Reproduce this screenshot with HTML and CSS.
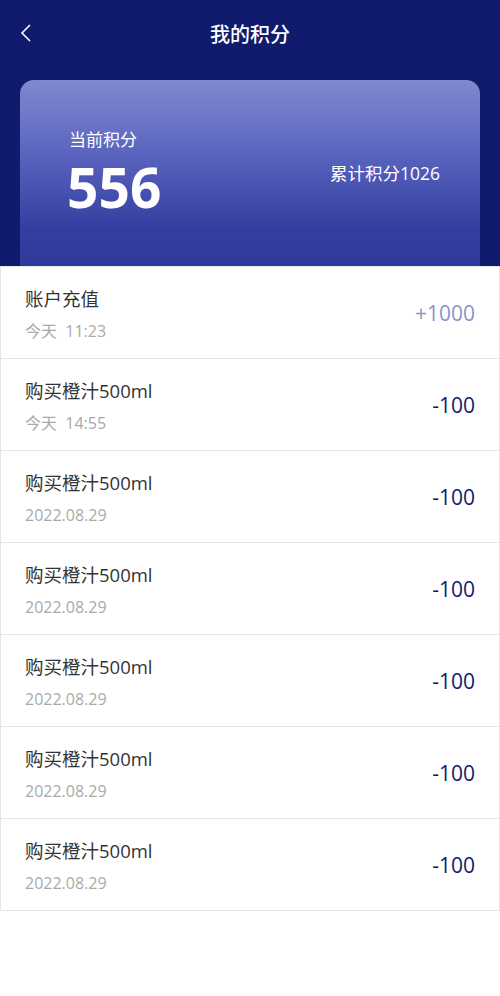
FILE: index.html
```html
<!DOCTYPE html>
<html lang="zh-CN">
<head>
    <meta charset="UTF-8">
    <title>我的积分</title>
    <link rel="stylesheet" href="styles.css">
</head>
<body>
<div class="header">
    <div class="topbar">
        <span class="back">
            <svg width="12" height="18" viewBox="0 0 12 18"><path d="M10 1 L2 9 L10 17" fill="none" stroke="#fff" stroke-width="1.6"/></svg>
        </span>
        <h1 class="title">我的积分</h1>
    </div>
    <div class="card">
        <div class="current">
            <div class="current-label">当前积分</div>
            <div class="current-value">556</div>
        </div>
        <div class="total">累计积分1026</div>
    </div>
</div>

<ul class="records">
    <li class="record">
        <div class="info">
            <div class="name">账户充值</div>
            <div class="time">今天&nbsp;&nbsp;11:23</div>
        </div>
        <div class="amount plus">+1000</div>
    </li>
    <li class="record">
        <div class="info">
            <div class="name">购买橙汁500ml</div>
            <div class="time">今天&nbsp;&nbsp;14:55</div>
        </div>
        <div class="amount">-100</div>
    </li>
    <li class="record">
        <div class="info">
            <div class="name">购买橙汁500ml</div>
            <div class="time">2022.08.29</div>
        </div>
        <div class="amount">-100</div>
    </li>
    <li class="record">
        <div class="info">
            <div class="name">购买橙汁500ml</div>
            <div class="time">2022.08.29</div>
        </div>
        <div class="amount">-100</div>
    </li>
    <li class="record">
        <div class="info">
            <div class="name">购买橙汁500ml</div>
            <div class="time">2022.08.29</div>
        </div>
        <div class="amount">-100</div>
    </li>
    <li class="record">
        <div class="info">
            <div class="name">购买橙汁500ml</div>
            <div class="time">2022.08.29</div>
        </div>
        <div class="amount">-100</div>
    </li>
    <li class="record">
        <div class="info">
            <div class="name">购买橙汁500ml</div>
            <div class="time">2022.08.29</div>
        </div>
        <div class="amount">-100</div>
    </li>
</ul>
</body>
</html>
```

FILE: styles.css
```css
body {
    margin: 0;
    font-family: "Open Sans", "Noto Sans CJK SC", sans-serif;
    background-color: #FFFFFF;
}
.header {
    background-color: #101B6E; /* Dark navy */
    padding: 0 20px;
}
.topbar {
    height: 66px;
    display: flex;
    align-items: center;
    justify-content: center;
    position: relative;
}
.back {
    position: absolute;
    left: 0;
    top: 24px;
    display: flex;
}
.title {
    margin: 0;
    font-size: 20px;
    font-weight: 500;
    color: #FFFFFF;
}
.card {
    margin-top: 14px;
    height: 186px;
    border-radius: 14px 14px 0 0;
    background: linear-gradient(to bottom, #8189D1 0%, #5A64BE 40%, #333E9F 80%, #2F3A9C 100%);
    display: flex;
    align-items: flex-start;
    justify-content: space-between;
    padding: 0 40px 0 47px;
    color: #FFFFFF;
}
.current {
    padding-top: 47px;
}
.current-label {
    font-size: 17px;
    line-height: 26px;
    padding-left: 2px;
}
.current-value {
    font-size: 55px;
    font-weight: 700;
    line-height: 62px;
    margin-top: 3px;
}
.total {
    margin-top: 80px;
    font-size: 17.5px;
    line-height: 26px;
}
.records {
    list-style: none;
    margin: 0;
    padding: 0;
}
.record {
    height: 91px;
    border: 1px solid #E5E5E5;
    border-top: none;
    display: flex;
    align-items: center;
    justify-content: space-between;
    padding: 0 24px 0 24px;
}
.record:first-child {
    border-top: 1px solid #E5E5E5;
}
.info {
    padding-top: 2px;
}
.name {
    font-size: 18.5px;
    color: #333333;
    line-height: 26px;
}
.time {
    font-size: 16px;
    color: #AAAAAA;
    line-height: 22px;
    margin-top: 8px;
}
.amount {
    font-size: 21px;
    color: #101B6E;
}
.amount.plus {
    color: #8A93CC; /* Light violet */
}
```
